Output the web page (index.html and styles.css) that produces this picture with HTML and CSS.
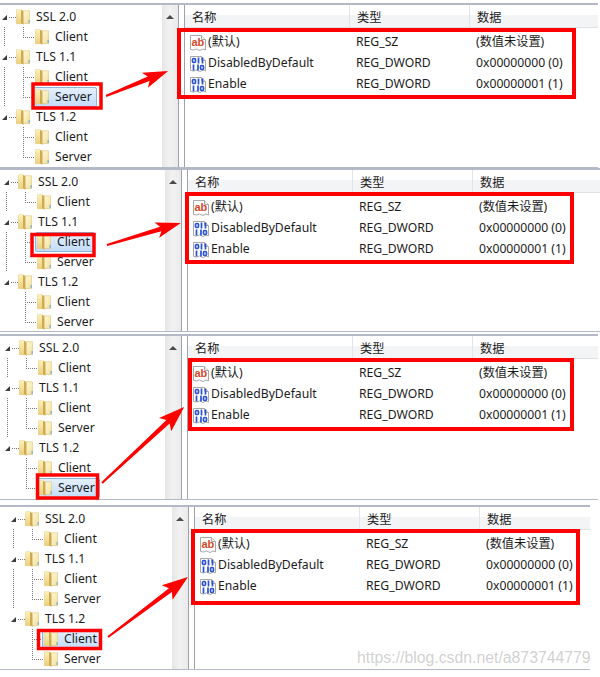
FILE: index.html
```html
<!DOCTYPE html>
<html lang="zh">
<head>
<meta charset="utf-8">
<title>Registry</title>
<link rel="stylesheet" href="styles.css">
</head>
<body>
<svg class="defs" width="0" height="0" aria-hidden="true">
  <defs>
    <linearGradient id="fl" x1="0" y1="0" x2="0" y2="1"><stop offset="0" stop-color="#fbf1ba"/><stop offset="1" stop-color="#ecd07e"/></linearGradient>
    <linearGradient id="fr" x1="0" y1="0" x2="1" y2="1"><stop offset="0" stop-color="#fff9d8"/><stop offset="1" stop-color="#f3e09c"/></linearGradient>
    <symbol id="folder" viewBox="0 0 14 16">
      <path d="M.5 .8h4.500l1 1h7.500v12.800H.5z" fill="url(#fl)" stroke="#dcc27a" stroke-width=".6"/>
      <path d="M7 2.500h6.200v11.600H7z" fill="url(#fr)"/>
      <path d="M5 .8l2.500 1.700v13.200L5 14.200z" fill="#cfaa52"/>
      <path d="M.5 .8h4.500v13.800H.5z" fill="url(#fl)"/>
      <path d="M12.600 11h1v3h-1z" fill="#5aa5d8"/>
    </symbol>
    <symbol id="paper" viewBox="0 0 16 16">
      <path d="M.5.5h11l4 4v10.400l-2.500-.9-3 1.500-3.500-1.500-3 1-3-.6z" fill="#fff" stroke="#a8a8a8"/>
      <path d="M11.500.5v4h4" fill="#eee" stroke="#a8a8a8"/>
    </symbol>
    <symbol id="bin" viewBox="0 0 16 16">
      <use href="#paper" width="16" height="16"/>
      <g fill="none" stroke="#2a50d4" stroke-width="1.700">
        <rect x="2.500" y="2.500" width="3" height="4" rx="1.200"/>
        <path d="M8.500 1.500v6M12.500 1.500v6M3.500 8.500v6M8 8.500v6"/>
        <rect x="10.500" y="9.500" width="3" height="4" rx="1.200"/>
      </g>
    </symbol>
  </defs>
</svg>

<section class="panel panel--1">
  <div class="tree">
    <div class="nodes">
      <div class="row"><i class="tri"></i><i class="dash"></i><svg class="folder"><use href="#folder"/></svg><span class="label">SSL 2.0</span></div>
      <div class="row row--child row--trunk"><i class="elbow"></i><span class="item"><svg class="folder"><use href="#folder"/></svg><span class="label">Client</span></span></div>
      <div class="row"><i class="tri"></i><i class="dash"></i><svg class="folder"><use href="#folder"/></svg><span class="label">TLS 1.1</span></div>
      <div class="row row--child row--trunk"><i class="elbow"></i><span class="item"><svg class="folder"><use href="#folder"/></svg><span class="label">Client</span></span></div>
      <div class="row row--child row--trunk"><i class="elbow elbow--long"></i><span class="item item--sel"><svg class="folder"><use href="#folder"/></svg><span class="label">Server</span></span></div>
      <div class="row"><i class="tri"></i><i class="dash"></i><svg class="folder"><use href="#folder"/></svg><span class="label">TLS 1.2</span></div>
      <div class="row row--child"><i class="elbow"></i><span class="item"><svg class="folder"><use href="#folder"/></svg><span class="label">Client</span></span></div>
      <div class="row row--child"><i class="elbow elbow--long"></i><span class="item"><svg class="folder"><use href="#folder"/></svg><span class="label">Server</span></span></div>
    </div>
    <div class="scrollbar"><i class="scroll-up"></i></div>
  </div>
  <div class="pane">
    <div class="grid head"><span class="cell cell--name">名称</span><span class="cell">类型</span><span class="cell">数据</span></div>
    <div class="grid entry"><span class="cell cell--entry"><svg class="regicon" viewBox="0 0 16 16"><use href="#paper"/><text x="1.500" y="10.500" class="ab">ab</text></svg>(默认)</span><span class="cell">REG_SZ</span><span class="cell">(数值未设置)</span></div>
    <div class="grid entry"><span class="cell cell--entry"><svg class="regicon"><use href="#bin"/></svg>DisabledByDefault</span><span class="cell">REG_DWORD</span><span class="cell">0x00000000 (0)</span></div>
    <div class="grid entry"><span class="cell cell--entry"><svg class="regicon"><use href="#bin"/></svg>Enable</span><span class="cell">REG_DWORD</span><span class="cell">0x00000001 (1)</span></div>
  </div>
</section>

<section class="panel panel--2">
  <div class="tree">
    <div class="nodes">
      <div class="row"><i class="tri"></i><i class="dash"></i><svg class="folder"><use href="#folder"/></svg><span class="label">SSL 2.0</span></div>
      <div class="row row--child row--trunk"><i class="elbow"></i><span class="item"><svg class="folder"><use href="#folder"/></svg><span class="label">Client</span></span></div>
      <div class="row"><i class="tri"></i><i class="dash"></i><svg class="folder"><use href="#folder"/></svg><span class="label">TLS 1.1</span></div>
      <div class="row row--child row--trunk"><i class="elbow"></i><span class="item item--sel"><svg class="folder"><use href="#folder"/></svg><span class="label">Client</span></span></div>
      <div class="row row--child row--trunk"><i class="elbow elbow--long"></i><span class="item"><svg class="folder"><use href="#folder"/></svg><span class="label">Server</span></span></div>
      <div class="row"><i class="tri"></i><i class="dash"></i><svg class="folder"><use href="#folder"/></svg><span class="label">TLS 1.2</span></div>
      <div class="row row--child"><i class="elbow"></i><span class="item"><svg class="folder"><use href="#folder"/></svg><span class="label">Client</span></span></div>
      <div class="row row--child"><i class="elbow elbow--long"></i><span class="item"><svg class="folder"><use href="#folder"/></svg><span class="label">Server</span></span></div>
    </div>
    <div class="scrollbar"><i class="scroll-up"></i></div>
  </div>
  <div class="pane">
    <div class="grid head"><span class="cell cell--name">名称</span><span class="cell">类型</span><span class="cell">数据</span></div>
    <div class="grid entry"><span class="cell cell--entry"><svg class="regicon" viewBox="0 0 16 16"><use href="#paper"/><text x="1.500" y="10.500" class="ab">ab</text></svg>(默认)</span><span class="cell">REG_SZ</span><span class="cell">(数值未设置)</span></div>
    <div class="grid entry"><span class="cell cell--entry"><svg class="regicon"><use href="#bin"/></svg>DisabledByDefault</span><span class="cell">REG_DWORD</span><span class="cell">0x00000000 (0)</span></div>
    <div class="grid entry"><span class="cell cell--entry"><svg class="regicon"><use href="#bin"/></svg>Enable</span><span class="cell">REG_DWORD</span><span class="cell">0x00000001 (1)</span></div>
  </div>
</section>

<section class="panel panel--3">
  <div class="tree">
    <div class="nodes">
      <div class="row"><i class="tri"></i><i class="dash"></i><svg class="folder"><use href="#folder"/></svg><span class="label">SSL 2.0</span></div>
      <div class="row row--child row--trunk"><i class="elbow"></i><span class="item"><svg class="folder"><use href="#folder"/></svg><span class="label">Client</span></span></div>
      <div class="row"><i class="tri"></i><i class="dash"></i><svg class="folder"><use href="#folder"/></svg><span class="label">TLS 1.1</span></div>
      <div class="row row--child row--trunk"><i class="elbow"></i><span class="item"><svg class="folder"><use href="#folder"/></svg><span class="label">Client</span></span></div>
      <div class="row row--child row--trunk"><i class="elbow elbow--long"></i><span class="item"><svg class="folder"><use href="#folder"/></svg><span class="label">Server</span></span></div>
      <div class="row"><i class="tri"></i><i class="dash"></i><svg class="folder"><use href="#folder"/></svg><span class="label">TLS 1.2</span></div>
      <div class="row row--child"><i class="elbow"></i><span class="item"><svg class="folder"><use href="#folder"/></svg><span class="label">Client</span></span></div>
      <div class="row row--child"><i class="elbow elbow--long"></i><span class="item item--sel"><svg class="folder"><use href="#folder"/></svg><span class="label">Server</span></span></div>
    </div>
    <div class="scrollbar"><i class="scroll-up"></i></div>
  </div>
  <div class="pane">
    <div class="grid head"><span class="cell cell--name">名称</span><span class="cell">类型</span><span class="cell">数据</span></div>
    <div class="grid entry"><span class="cell cell--entry"><svg class="regicon" viewBox="0 0 16 16"><use href="#paper"/><text x="1.500" y="10.500" class="ab">ab</text></svg>(默认)</span><span class="cell">REG_SZ</span><span class="cell">(数值未设置)</span></div>
    <div class="grid entry"><span class="cell cell--entry"><svg class="regicon"><use href="#bin"/></svg>DisabledByDefault</span><span class="cell">REG_DWORD</span><span class="cell">0x00000000 (0)</span></div>
    <div class="grid entry"><span class="cell cell--entry"><svg class="regicon"><use href="#bin"/></svg>Enable</span><span class="cell">REG_DWORD</span><span class="cell">0x00000001 (1)</span></div>
  </div>
</section>

<section class="panel panel--4">
  <div class="tree">
    <div class="nodes">
      <div class="row"><i class="tri"></i><i class="dash"></i><svg class="folder"><use href="#folder"/></svg><span class="label">SSL 2.0</span></div>
      <div class="row row--child row--trunk"><i class="elbow"></i><span class="item"><svg class="folder"><use href="#folder"/></svg><span class="label">Client</span></span></div>
      <div class="row"><i class="tri"></i><i class="dash"></i><svg class="folder"><use href="#folder"/></svg><span class="label">TLS 1.1</span></div>
      <div class="row row--child row--trunk"><i class="elbow"></i><span class="item"><svg class="folder"><use href="#folder"/></svg><span class="label">Client</span></span></div>
      <div class="row row--child row--trunk"><i class="elbow elbow--long"></i><span class="item"><svg class="folder"><use href="#folder"/></svg><span class="label">Server</span></span></div>
      <div class="row"><i class="tri"></i><i class="dash"></i><svg class="folder"><use href="#folder"/></svg><span class="label">TLS 1.2</span></div>
      <div class="row row--child"><i class="elbow"></i><span class="item item--sel"><svg class="folder"><use href="#folder"/></svg><span class="label">Client</span></span></div>
      <div class="row row--child"><i class="elbow elbow--long"></i><span class="item"><svg class="folder"><use href="#folder"/></svg><span class="label">Server</span></span></div>
    </div>
    <div class="scrollbar"><i class="scroll-up"></i></div>
  </div>
  <div class="pane">
    <div class="grid head"><span class="cell cell--name">名称</span><span class="cell">类型</span><span class="cell">数据</span></div>
    <div class="grid entry"><span class="cell cell--entry"><svg class="regicon" viewBox="0 0 16 16"><use href="#paper"/><text x="1.500" y="10.500" class="ab">ab</text></svg>(默认)</span><span class="cell">REG_SZ</span><span class="cell">(数值未设置)</span></div>
    <div class="grid entry"><span class="cell cell--entry"><svg class="regicon"><use href="#bin"/></svg>DisabledByDefault</span><span class="cell">REG_DWORD</span><span class="cell">0x00000000 (0)</span></div>
    <div class="grid entry"><span class="cell cell--entry"><svg class="regicon"><use href="#bin"/></svg>Enable</span><span class="cell">REG_DWORD</span><span class="cell">0x00000001 (1)</span></div>
  </div>
</section>

<svg class="notes" viewBox="0 0 600 677" aria-hidden="true">
  <g class="box box--thin">
    <rect x="33" y="84" width="68" height="24"/>
    <rect x="32" y="234.500" width="62" height="21"/>
    <rect x="37.500" y="475" width="60" height="23"/>
    <rect x="38.500" y="630.500" width="62" height="18"/>
  </g>
  <g class="box">
    <rect x="179" y="30" width="395" height="67"/>
    <rect x="187" y="194" width="385" height="68"/>
    <rect x="190" y="360" width="382" height="69"/>
    <rect x="193" y="531" width="385" height="72"/>
  </g>
  <g class="arrow">
    <path transform="translate(106 96) rotate(-22)" d="M0 -1L46 -2.400L42 -8L67 0L42 8L46 2.400L0 1Z"/>
    <path transform="translate(107 245) rotate(-16.600)" d="M0 -1L56 -2.400L52 -8L77 0L52 8L56 2.400L0 1Z"/>
    <path transform="translate(102 483) rotate(-42.800)" d="M0 -1L90 -2.400L86 -9L112 0L86 9L90 2.400L0 1Z"/>
    <path transform="translate(108 637) rotate(-36.900)" d="M0 -1L78 -2.400L74 -9L100 0L74 9L78 2.400L0 1Z"/>
  </g>
</svg>
<div class="watermark">https://blog.csdn.net/a873744779</div>
</body>
</html>
```
FILE: styles.css
```css
* { box-sizing: border-box; }

html, body { margin: 0; padding: 0; }

body {
  position: relative;
  width: 600px;
  height: 677px;
  overflow: hidden;
  background: #fff;
  color: #1c1c1c;
  font: 12.2px/1 "Noto Sans", "Noto Sans CJK SC", sans-serif;
}

.defs { position: absolute; }

.panel {
  display: flex;
  border-top: 2px solid #b4b9c7;
  border-bottom: 1px solid #b4b9c7;
  height: 165px;
}

.panel--1 { width: 598px; margin-top: 3px; --tree-w: 179px; --tree-pad: 0px; }
.panel--2 { width: 600px; height: 164px; --tree-w: 182px; --tree-pad: 2px; }
.panel--3 { width: 598px; height: 166px; margin-top: 2px; --tree-w: 182px; --tree-pad: 3px; }
.panel--4 { width: 590px; margin-top: 5px; --tree-w: 189px; --tree-pad: 9px; }

.tree {
  display: flex;
  flex: none;
  width: var(--tree-w);
  padding-left: var(--tree-pad);
  border-right: 1px solid #9ea2ac;
}

.nodes { flex: 1; padding-top: 2px; }

.row {
  display: flex;
  align-items: center;
  height: 20px;
  padding-left: 2px;
}

.row--child { padding-left: 23px; }

.row--trunk {
  background: repeating-linear-gradient(#777 0 1px, transparent 1px 2px) 4px 0 / 1px 100% no-repeat;
}

.tri {
  flex: none;
  width: 0;
  height: 0;
  border-left: 5px solid transparent;
  border-bottom: 5px solid #3c3c3c;
}

.dash {
  flex: none;
  width: 7px;
  margin-left: 2px;
  border-top: 1px dotted #777;
}

.folder { flex: none; width: 14px; height: 16px; }

.label { margin-left: 6px; white-space: nowrap; }

.elbow {
  flex: none;
  align-self: flex-start;
  width: 11px;
  height: 11px;
  border-left: 1px dotted #777;
  border-bottom: 1px dotted #777;
}

.elbow--long { height: 31px; margin-top: -20px; }

.item {
  display: flex;
  align-items: center;
  height: 20px;
  padding: 0 4px 0 1px;
  border: 1px solid transparent;
  margin-left: -1px;
}

.item--sel {
  border-color: #8fb4dc;
  border-radius: 2px;
  background: linear-gradient(#e4f0fd, #c4ddfb);
}

.scrollbar {
  flex: none;
  width: 16px;
  padding-top: 10px;
  background: linear-gradient(90deg, #e6e6e6, #f2f2f2 50%, #eaeaea);
}

.scroll-up {
  display: block;
  width: 0;
  height: 0;
  margin: 0 auto;
  border: 4px solid transparent;
  border-top: 0;
  border-bottom: 4px solid #4a4a4a;
}

.pane {
  flex: 1;
  margin-left: 5px;
  border-left: 1px solid #9ea2ac;
}

.grid {
  display: grid;
  grid-template-columns: 164px 120px 1fr;
  align-items: center;
}

.head {
  height: 23px;
  border-bottom: 1px solid #dfe0e2;
  background: linear-gradient(#fff 0 45%, #f3f4f6 45%);
}

.head .cell { padding-top: 5px; height: 100%; display: flex; align-items: center; border-left: 1px solid #e3e4e7; }
.head .cell--name { border-left: 0; padding-left: 7px; }

.entry { height: 21px; }
.head + .entry { margin-top: 4px; }

.cell { padding-left: 7px; white-space: nowrap; }

.cell--entry { display: flex; align-items: center; padding-left: 5px; }

.regicon { flex: none; width: 16px; height: 16px; margin-right: 2px; }

.ab { font: bold 11px "Liberation Sans", sans-serif; fill: #d2492a; }

.notes {
  position: absolute;
  top: 0;
  left: 0;
  width: 600px;
  height: 677px;
  pointer-events: none;
}

.box { fill: none; stroke: #f00; stroke-width: 4; }
.box--thin { stroke-width: 3.500; }
.arrow { fill: #f00; }

.watermark {
  position: absolute;
  top: 649px;
  left: 357px;
  color: rgba(170, 170, 170, .55);
  font: 15.800px/1.200 "Liberation Sans", sans-serif;
  white-space: nowrap;
}
```
